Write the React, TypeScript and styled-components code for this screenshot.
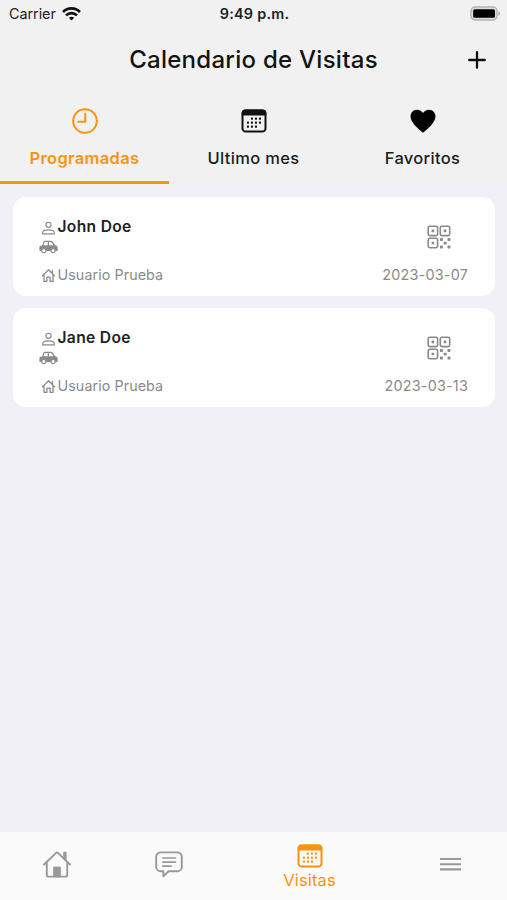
import React from "react";
import styled, { createGlobalStyle } from "styled-components";

const ORANGE = "#fa930f";
const GREY = "#8a8a8a";

const GlobalStyle = createGlobalStyle`
  *, *::before, *::after { box-sizing: border-box; }
  body { margin: 0; background: #f1f0f6; font-family: Inter, "Liberation Sans", sans-serif; }
  svg { display: block; flex: none; overflow: visible; }
`;

const Screen = styled.div`
  display: flex;
  flex-direction: column;
  height: 900px;
  width: 507px;
  overflow: hidden;
  background: #f1f0f6;
`;

const Header = styled.header`
  height: 184px;
  background: #f1f1f1;
`;

const StatusBar = styled.div`
  display: grid;
  grid-template-columns: 1fr auto 1fr;
  align-items: center;
  height: 27px;
  padding: 0 7px 0 9px;
  color: #222;
`;

const Carrier = styled.div`
  display: flex;
  align-items: center;
  gap: 6px;
  font-size: 14.4px;
  line-height: 20px;
  letter-spacing: -0.05px;
`;

const Time = styled.time`
  font-size: 14.4px;
  line-height: 20px;
  font-weight: 600;
  letter-spacing: 0.25px;
`;

const BatterySlot = styled.div`
  display: flex;
  justify-content: flex-end;
`;

const TitleBar = styled.div`
  display: grid;
  grid-template-columns: 50px 1fr 50px;
  align-items: center;
  height: 65px;
  padding: 0 5px 0 5px;
`;

const Title = styled.h1`
  grid-column: 2;
  margin: 0;
  text-align: center;
  font-size: 24px;
  line-height: 30px;
  font-weight: 500;
  letter-spacing: 0.27px;
  color: #141414;
  white-space: nowrap;
`;

const AddButton = styled.button`
  display: flex;
  justify-content: center;
  padding: 0;
  border: 0;
  background: none;
`;

const Tabs = styled.nav`
  display: grid;
  grid-template-columns: repeat(3, 1fr);
  height: 92px;
`;

const Tab = styled.div<{ $active?: boolean }>`
  display: flex;
  flex-direction: column;
  align-items: center;
  gap: 13px;
  padding-top: 16px;
  border-bottom: 3px solid ${(p) => (p.$active ? ORANGE : "transparent")};
  color: ${(p) => (p.$active ? ORANGE : "#1c1c1c")};
  font-size: 16.5px;
  line-height: 22px;
  font-weight: ${(p) => (p.$active ? 600 : 500)};
  letter-spacing: 0.32px;
  white-space: nowrap;
`;

const List = styled.main`
  display: flex;
  flex: 1;
  flex-direction: column;
  gap: 12px;
  padding: 12.5px 12px 0 13px;
`;

const Card = styled.article`
  display: flex;
  justify-content: space-between;
  height: 99px;
  padding: 20px 27px 0 26px;
  border-radius: 13px;
  background: #fff;
  color: ${GREY};
`;

const Details = styled.div`
  display: flex;
  flex-direction: column;
`;

const Row = styled.div`
  display: flex;
  align-items: center;
  gap: 3px;
  height: 21px;
  padding-left: 2.5px;
`;

const VehicleRow = styled.div`
  height: 27px;
  padding-top: 2px;
`;

const Name = styled.strong`
  font-size: 15.6px;
  line-height: 20px;
  font-weight: 600;
  letter-spacing: 0.33px;
  color: #222;
`;

const Host = styled.span`
  font-size: 14.3px;
  line-height: 20px;
  letter-spacing: 0.08px;
`;

const Access = styled.div`
  display: flex;
  flex-direction: column;
  align-items: flex-end;
  justify-content: space-between;
  padding: 8px 0 10.5px;

  svg { margin-right: 17px; }
`;

const DateText = styled.time`
  font-size: 14.4px;
  line-height: 20px;
  letter-spacing: 0.2px;
`;

const BottomBar = styled.footer`
  display: grid;
  grid-template-columns: 113px 112px 169px 113px;
  height: 69px;
  border-top: 1px solid #f3f3f3;
  background: #fafafa;
`;

const NavItem = styled.div<{ $active?: boolean }>`
  display: flex;
  flex-direction: column;
  align-items: center;
  justify-content: flex-start;
  gap: ${(p) => (p.$active ? 2 : 3)}px;
  padding-top: ${(p) => (p.$active ? 12 : 18.5)}px;
  color: ${(p) => (p.$active ? ORANGE : "#999")};
  font-size: 16.5px;
  line-height: 20px;
  letter-spacing: 0.15px;
`;

const WifiIcon = () => (
  <svg width="19" height="14" viewBox="0 0 19 14" fill="none" stroke="#111" strokeWidth="2.6">
    <path d="M1 5C5.8.2 13.2.2 18 5" />
    <path d="M4 8.4c3.2-3.1 7.8-3.1 11 0" />
    <path d="M6.8 10.7c1.5-1.4 3.9-1.4 5.4 0L9.5 13.5z" fill="#111" stroke="none" />
  </svg>
);

const BatteryIcon = () => (
  <svg width="30" height="15" viewBox="0 0 30 15">
    <rect x="1" y="1" width="26" height="13" rx="4" fill="#ddd" stroke="#b5b5b5" strokeWidth="1.5" />
    <rect x="3.2" y="3.2" width="21.8" height="8.6" rx="1.5" fill="#000" />
    <path d="M28.3 5.2c2.2.6 2.2 4 0 4.6z" fill="#aaa" />
  </svg>
);

const PlusIcon = () => (
  <svg width="18" height="18" viewBox="0 0 18 18" stroke="#111" strokeWidth="2.3" strokeLinecap="round">
    <path d="M9 1.2v15.6M1.2 9h15.6" />
  </svg>
);

const ClockIcon = () => (
  <svg width="26" height="26" viewBox="0 0 26 26" fill="none" stroke="currentColor" strokeWidth="2" strokeLinecap="round" strokeLinejoin="round">
    <circle cx="13" cy="13" r="11.8" />
    <path d="M13.3 5.8v8H6.2" />
  </svg>
);

const DOTS = [
  [10.5, 9.5], [14.5, 9.5], [18.5, 9.5],
  [6.5, 13.5], [10.5, 13.5], [14.5, 13.5], [18.5, 13.5],
  [6.5, 17.5], [10.5, 17.5], [14.5, 17.5],
];

const CalendarIcon = ({ color, height }: { color: string; height: number }) => (
  <svg width="26" height={height} viewBox={`0 ${(24 - height) / 2} 26 ${height}`}>
    <rect x="1.5" y="1.4" width="23" height="21.2" rx="3.2" fill="none" stroke={color} strokeWidth="2" />
    <path d="M.7 6.5V4A3.6 3.6 0 0 1 4.3.4h17.4A3.6 3.6 0 0 1 25.3 4v2.5z" fill={color} />
    {DOTS.map(([x, y]) => (
      <rect key={`${x}-${y}`} x={x - 0.6} y={y - 0.9} width="2.1" height="2.1" rx=".6" fill={color} />
    ))}
  </svg>
);

const HeartIcon = () => (
  <svg width="26" height="26" viewBox="0 0 26 26" fill="#000">
    <path d="M13 24.8C8.5 21 .5 14.4.5 8.5.5 4.6 3.3 1.7 7 1.7c2.6 0 4.8 1.3 6 3.4 1.2-2.1 3.4-3.4 6-3.4 3.7 0 6.5 2.9 6.5 6.8 0 5.9-8 12.5-12.5 16.3z" />
  </svg>
);

const PersonIcon = () => (
  <svg width="13" height="13" viewBox="0 -.5 13 13" fill="none" stroke="currentColor" strokeWidth="1.15">
    <circle cx="6.5" cy="3.3" r="2.6" />
    <path d="M.7 12.3v-1.1c0-2 2.8-2.9 5.8-2.9s5.8.9 5.8 2.9v1.1z" />
  </svg>
);

const CarIcon = () => (
  <svg width="19" height="14" viewBox="0 0 19 14">
    <path d="M1 6.1 3 5.5 4.5 1.8C4.8 1 5.3.7 6 .7h5.6c.8 0 1.4.3 1.9.9l2.7 3.6c1.6.2 2.5 1.2 2.5 2.8v2.1c0 .7-.3 1-1 1H1.4c-.7 0-1-.3-1-1V7.3c0-.6.1-1 .6-1.2z" fill="currentColor" />
    <path d="M5.7 2h3v3.3H4.4zM10 2h1.4c.5 0 .8.1 1.1.5l2 2.8H10z" fill="#fff" />
    <circle cx="4.8" cy="10.6" r="2.1" fill="#fff" stroke="currentColor" strokeWidth="1.1" />
    <circle cx="14.1" cy="10.6" r="2.1" fill="#fff" stroke="currentColor" strokeWidth="1.1" />
  </svg>
);

const SmallHomeIcon = () => (
  <svg width="13" height="13" viewBox="0 0 13 13" fill="none" stroke="currentColor" strokeWidth="1.3" strokeLinejoin="round" strokeLinecap="round">
    <path d="M.5 6.7 6.5.8l6 5.9M10.4 4.2V1.5M2 5.6v6.7h2.9V8.2h3.2v4.1H11V5.6" />
  </svg>
);

const QrIcon = () => (
  <svg width="24" height="24" viewBox="0 0 24 24" fill="none" stroke="currentColor" strokeWidth="1.6">
    {[[1.2, 1.2], [13.3, 1.2], [1.2, 13.3]].map(([x, y]) => (
      <g key={`${x}-${y}`}>
        <rect x={x} y={y} width="9.4" height="9.4" rx="1.6" />
        <rect x={x + 3.4} y={y + 3.4} width="2.6" height="2.6" rx=".3" fill="currentColor" stroke="none" />
      </g>
    ))}
    {[[13, 13], [20.5, 13], [16.7, 16.7], [13, 20.5], [20.5, 20.5]].map(([x, y]) => (
      <rect key={`${x}-${y}`} x={x} y={y} width="2.9" height="2.9" rx=".6" fill="currentColor" stroke="none" />
    ))}
  </svg>
);

const HomeIcon = () => (
  <svg width="30" height="27" viewBox="0 0 30 27" fill="none" stroke="currentColor" strokeWidth="1.9" strokeLinecap="round" strokeLinejoin="round">
    <path d="M1.8 13.7 13.8 2.1c.7-.7 1.7-.7 2.4 0l12 11.6" />
    <path d="M4.8 12v11.9c0 1 .7 1.7 1.7 1.7h17c1 0 1.7-.7 1.7-1.7V12" />
    <path d="M21.8 6.5V1.2h2.3v7.6z" fill="currentColor" strokeWidth="1" />
    <path d="M11.6 25.5V16h6.8v9.5z" fill="currentColor" strokeWidth=".8" />
  </svg>
);

const ChatIcon = () => (
  <svg width="28" height="27" viewBox="0 0 28 27" fill="none" stroke="currentColor" strokeWidth="1.9" strokeLinecap="round" strokeLinejoin="round">
    <path d="M5.5 1.4h17A4.3 4.3 0 0 1 26.8 5.7v10.2a4.3 4.3 0 0 1-4.3 4.3h-8.9L8.3 25.3v-5.1H5.5a4.3 4.3 0 0 1-4.3-4.3V5.7a4.3 4.3 0 0 1 4.3-4.3z" />
    <path d="M7.8 7h12.6M7.8 11.1h12.6M7.8 15.1h8.4" strokeWidth="1.7" />
  </svg>
);

const MenuIcon = () => (
  <svg width="21" height="27" viewBox="0 0 21 27" stroke="currentColor" strokeWidth="2.1">
    <path d="M0 8h21M0 13.2h21M0 18.4h21" />
  </svg>
);

const visits = [
  { name: "John Doe", host: "Usuario Prueba", date: "2023-03-07" },
  { name: "Jane Doe", host: "Usuario Prueba", date: "2023-03-13" },
];

export default function App() {
  return (
    <>
      <GlobalStyle />
      <Screen>
        <Header>
          <StatusBar>
            <Carrier>Carrier <WifiIcon /></Carrier>
            <Time>9:49 p.m.</Time>
            <BatterySlot><BatteryIcon /></BatterySlot>
          </StatusBar>
          <TitleBar>
            <Title>Calendario de Visitas</Title>
            <AddButton aria-label="Agregar"><PlusIcon /></AddButton>
          </TitleBar>
          <Tabs>
            <Tab $active><ClockIcon />Programadas</Tab>
            <Tab><CalendarIcon color="#111" height={26} />Ultimo mes</Tab>
            <Tab><HeartIcon />Favoritos</Tab>
          </Tabs>
        </Header>
        <List>
          {visits.map((visit) => (
            <Card key={visit.name}>
              <Details>
                <Row><PersonIcon /><Name>{visit.name}</Name></Row>
                <VehicleRow><CarIcon /></VehicleRow>
                <Row><SmallHomeIcon /><Host>{visit.host}</Host></Row>
              </Details>
              <Access>
                <QrIcon />
                <DateText>{visit.date}</DateText>
              </Access>
            </Card>
          ))}
        </List>
        <BottomBar>
          <NavItem><HomeIcon /></NavItem>
          <NavItem><ChatIcon /></NavItem>
          <NavItem $active><CalendarIcon color={ORANGE} height={24} />Visitas</NavItem>
          <NavItem><MenuIcon /></NavItem>
        </BottomBar>
      </Screen>
    </>
  );
}
